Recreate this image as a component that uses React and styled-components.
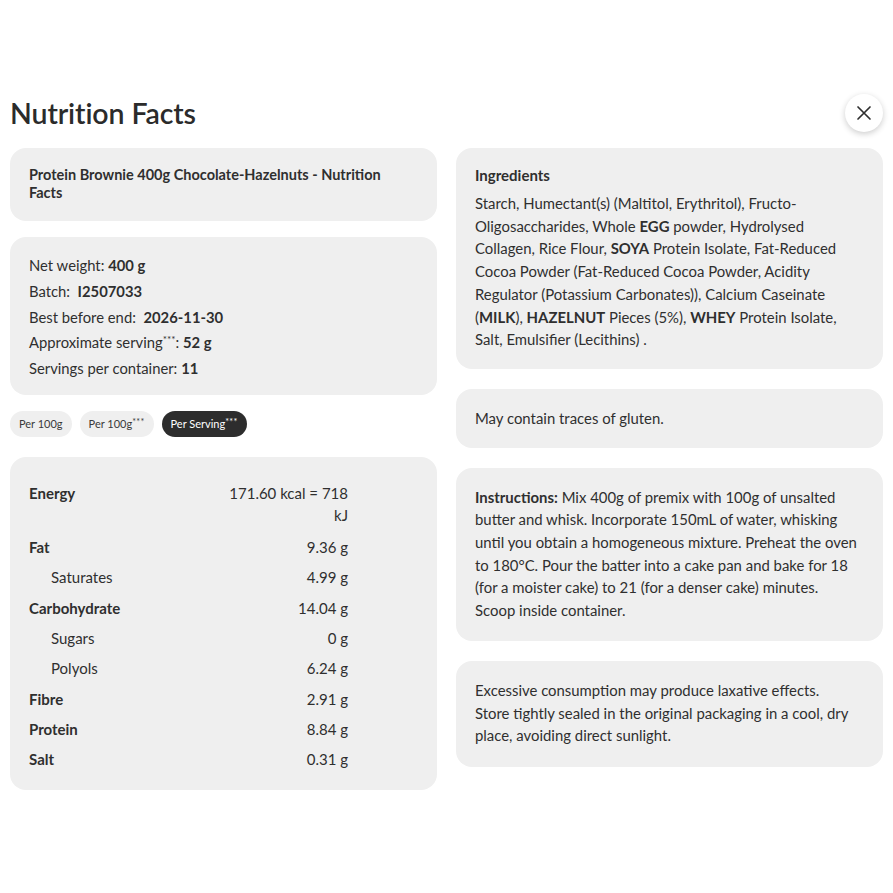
import React, { useState } from 'react';
import styled, { createGlobalStyle } from 'styled-components';

const GlobalStyle = createGlobalStyle`
  html, body {
    margin: 0;
    padding: 0;
    background: #ffffff;
  }
  body {
    font-family: Lato, "Liberation Sans", sans-serif;
    color: #2f2f2f;
    -webkit-font-smoothing: antialiased;
  }
`;

const facts = {
  per100: [],
  per100s: [],
  serving: [
    { label: 'Energy', value: '171.60 kcal = 718 kJ', bold: true },
    { label: 'Fat', value: '9.36 g', bold: true },
    { label: 'Saturates', value: '4.99 g' },
    { label: 'Carbohydrate', value: '14.04 g', bold: true },
    { label: 'Sugars', value: '0 g' },
    { label: 'Polyols', value: '6.24 g' },
    { label: 'Fibre', value: '2.91 g', bold: true },
    { label: 'Protein', value: '8.84 g', bold: true },
    { label: 'Salt', value: '0.31 g', bold: true },
  ],
};

const tabs = [
  { id: 'per100', label: 'Per 100g', mark: '' },
  { id: 'per100s', label: 'Per 100g', mark: '***' },
  { id: 'serving', label: 'Per Serving', mark: '***' },
];

const CloseIcon = () => (
  <svg width="16" height="16" viewBox="0 0 16 16" fill="none">
    <path d="M2 2L14 14M14 2L2 14" stroke="#2f2f2f" strokeWidth="1.7" strokeLinecap="round" />
  </svg>
);

const App = () => {
  const [tab, setTab] = useState('serving');
  const rows = facts[tab].length ? facts[tab] : facts.serving;

  return (
    <Page>
      <GlobalStyle />
      <Header>
        <Title>Nutrition Facts</Title>
        <CloseButton aria-label="Close">
          <CloseIcon />
        </CloseButton>
      </Header>

      <Columns>
        <Column>
          <Card $pad="18px 50px 19px 19px">
            <ProductName>Protein Brownie 400g Chocolate-Hazelnuts - Nutrition Facts</ProductName>
          </Card>

          <Card $pad="16px 19px 13px 19px">
            <InfoLine>Net weight: <b>400 g</b></InfoLine>
            <InfoLine>Batch:&nbsp; <b>I2507033</b></InfoLine>
            <InfoLine>Best before end:&nbsp; <b>2026-11-30</b></InfoLine>
            <InfoLine>Approximate serving<sup>***</sup>: <b>52 g</b></InfoLine>
            <InfoLine>Servings per container: <b>11</b></InfoLine>
          </Card>

          <Tabs>
            {tabs.map((t) => (
              <Tab key={t.id} $active={tab === t.id} onClick={() => setTab(t.id)}>
                {t.label}
                {t.mark && <sup>{t.mark}</sup>}
              </Tab>
            ))}
          </Tabs>

          <Card $pad="21px 19px 16px 19px">
            <FactsTable>
              <tbody>
                {rows.map((r) => (
                  <tr key={r.label}>
                    <FactLabel $bold={r.bold}>{r.label}</FactLabel>
                    <FactValue>{r.value}</FactValue>
                  </tr>
                ))}
              </tbody>
            </FactsTable>
          </Card>
        </Column>

        <Column $gap="20px">
          <Card $pad="18px 19px 18px 19px">
            <CardHeading>Ingredients</CardHeading>
            <Body>
              Starch, Humectant(s) (Maltitol, Erythritol), Fructo-Oligosaccharides, Whole <b>EGG</b> powder,
              Hydrolysed Collagen, Rice Flour, <b>SOYA</b> Protein Isolate, Fat-Reduced Cocoa Powder (Fat-Reduced
              Cocoa Powder, Acidity Regulator (Potassium Carbonates)), Calcium Caseinate (<b>MILK</b>),{' '}
              <b>HAZELNUT</b> Pieces (5%), <b>WHEY</b> Protein Isolate, Salt, Emulsifier (Lecithins) .
            </Body>
          </Card>

          <Card $pad="18px 19px 18px 19px">
            <Body>May contain traces of gluten.</Body>
          </Card>

          <Card $pad="18px 19px 19px 19px">
            <Body>
              <b>Instructions:</b> Mix 400g of premix with 100g of unsalted butter and whisk. Incorporate 150mL of
              water, whisking until you obtain a homogeneous mixture. Preheat the oven to 180°C. Pour the batter
              into a cake pan and bake for 18 (for a moister cake) to 21 (for a denser cake) minutes.{' '}
              <NoWrap>Scoop inside container.</NoWrap>
            </Body>
          </Card>

          <Card $pad="18px 19px 20px 19px">
            <Body>
              Excessive consumption may produce laxative effects.
              <br />
              Store tightly sealed in the original packaging in a cool, dry place, avoiding direct sunlight.
            </Body>
          </Card>
        </Column>
      </Columns>
    </Page>
  );
};

const Page = styled.div`
  width: 893px;
  box-sizing: border-box;
  padding: 94px 10px 40px 10px;
`;

const Header = styled.div`
  display: flex;
  align-items: center;
  justify-content: space-between;
  height: 38px;
  margin-bottom: 16px;
`;

const Title = styled.h1`
  margin: 0;
  font-size: 28.5px;
  font-weight: 600;
  color: #2b2b2b;
  letter-spacing: -0.1px;
`;

const CloseButton = styled.button`
  width: 38px;
  height: 38px;
  border-radius: 50%;
  border: none;
  background: #fff;
  box-shadow: 0 2px 6px rgba(0, 0, 0, 0.2);
  display: flex;
  align-items: center;
  justify-content: center;
  padding: 0;
  cursor: pointer;
`;

const Columns = styled.div`
  display: grid;
  grid-template-columns: 1fr 1fr;
  column-gap: 19px;
  align-items: start;
`;

const Column = styled.div`
  display: flex;
  flex-direction: column;
  gap: ${(props) => props.$gap || '16px'};
`;

const Card = styled.div`
  background: #efefef;
  border-radius: 16px;
  padding: ${(props) => props.$pad};
`;

const ProductName = styled.div`
  font-size: 14.5px;
  font-weight: 700;
  line-height: 18px;
`;

const InfoLine = styled.div`
  font-size: 14.8px;
  line-height: 25.75px;

  b {
    font-weight: 700;
  }

  sup {
    font-size: 10px;
    line-height: 0;
    vertical-align: 5px;
  }
`;

const Tabs = styled.div`
  display: flex;
  gap: 8px;
  margin-bottom: 4px;
`;

const Tab = styled.button`
  height: 26px;
  padding: 0 9px;
  border: none;
  border-radius: 13px;
  font-family: inherit;
  font-size: 11px;
  cursor: pointer;
  background: ${(props) => (props.$active ? '#2d2d2d' : '#efefef')};
  color: ${(props) => (props.$active ? '#ffffff' : '#3a3a3a')};

  sup {
    font-size: 9px;
    line-height: 0;
    vertical-align: 3px;
    letter-spacing: 0.3px;
  }
`;

const FactsTable = styled.table`
  width: 319px;
  border-collapse: collapse;
  font-size: 15px;
  line-height: 22px;

  td {
    padding: 4.15px 0;
    vertical-align: top;
  }

  tr:first-child td {
    padding-bottom: 6.15px;
  }
`;

const FactLabel = styled.td`
  font-weight: ${(props) => (props.$bold ? 700 : 400)};
  padding-left: ${(props) => (props.$bold ? '0' : '22px')} !important;
`;

const FactValue = styled.td`
  width: 120px;
  text-align: right;
`;

const CardHeading = styled.div`
  font-size: 15px;
  font-weight: 700;
  line-height: 18px;
  margin-bottom: 8px;
`;

const Body = styled.div`
  font-size: 14.9px;
  line-height: 22.7px;

  b {
    font-weight: 700;
  }
`;

const NoWrap = styled.span`
  white-space: nowrap;
`;

export default App;
